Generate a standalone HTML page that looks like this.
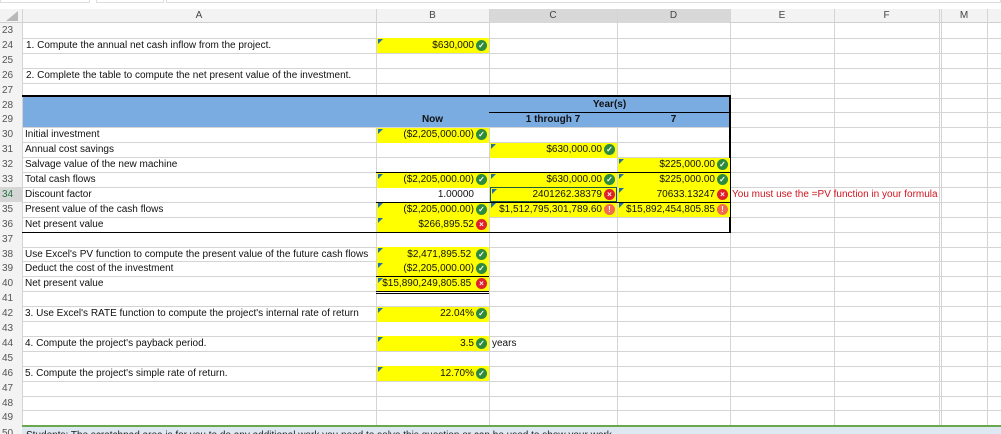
<!DOCTYPE html>
<html><head><meta charset="utf-8"><style>
*{margin:0;padding:0;box-sizing:border-box}
html,body{width:1001px;height:434px;overflow:hidden}
body{background:#fff;font-family:"Liberation Sans",sans-serif;font-size:10px;color:#111;position:relative}
.a{position:absolute}
.hl{position:absolute;left:0;width:1001px;height:1px;background:#d4d4d4}
.vl{position:absolute;top:9px;width:1px;height:425px;background:#d4d4d4}
.rn{position:absolute;left:0;width:22px;color:#555;font-size:10px;padding-left:2px;background:#f3f3f3;height:15px;line-height:15px}
.t{position:absolute;height:15px;line-height:15px;white-space:nowrap}
.y{position:absolute;height:15px;background:#ffff00}
.y:before{content:"";position:absolute;left:1px;top:1px;border-top:5px solid #1f6fa8;border-right:5px solid transparent}
.r{position:absolute;height:15px;line-height:15px;text-align:right;white-space:nowrap;overflow:visible}
.ic{display:inline-block;width:11px;height:11px;border-radius:50%;vertical-align:top;margin-top:2px;margin-left:2px;color:#fff;font-size:8px;line-height:11px;text-align:center;font-weight:bold}
.ok{background:#2e8b3e}.bad{background:#e0202a}.warn{background:#f26b4e}
.bk{position:absolute;height:1px;background:#000}
.hd{position:absolute;top:9px;height:14px;line-height:14px;text-align:center;color:#444}
</style></head><body>
<div class="a" style="left:0;top:0;width:90px;height:3px;border:1px solid #ddd;border-top:none"></div>
<div class="a" style="left:96px;top:0;width:68px;height:3px;border:1px solid #ddd;border-top:none"></div>
<div class="a" style="left:166px;top:0;width:835px;height:3px;border:1px solid #ddd;border-top:none"></div>
<div class="a" style="left:0;top:9px;width:1001px;height:14px;background:#f3f3f3;border-bottom:1px solid #cfcfcf"></div>
<div class="a" style="left:6px;top:11px;border-bottom:10px solid #b8b8b8;border-left:12px solid transparent"></div>
<div class="a" style="left:489px;top:9px;width:241px;height:14px;background:#d8d8d8"></div>
<div class="hd" style="left:22px;width:354px">A</div>
<div class="hd" style="left:376px;width:113px">B</div>
<div class="hd" style="left:489px;width:128px">C</div>
<div class="hd" style="left:617px;width:113px">D</div>
<div class="hd" style="left:730px;width:104px">E</div>
<div class="hd" style="left:834px;width:105px">F</div>
<div class="hd" style="left:941px;width:46px">M</div>
<div class="vl" style="left:22px"></div><div class="vl" style="left:376px"></div><div class="vl" style="left:489px"></div><div class="vl" style="left:617px"></div><div class="vl" style="left:730px"></div><div class="vl" style="left:834px"></div><div class="vl" style="left:939px"></div><div class="vl" style="left:941px"></div><div class="vl" style="left:987px"></div>
<div class="hl" style="top:37.9px"></div><div class="hl" style="top:52.8px"></div><div class="hl" style="top:67.7px"></div><div class="hl" style="top:82.6px"></div><div class="hl" style="top:97.5px"></div><div class="hl" style="top:112.4px"></div><div class="hl" style="top:127.3px"></div><div class="hl" style="top:142.2px"></div><div class="hl" style="top:157.1px"></div><div class="hl" style="top:172px"></div><div class="hl" style="top:186.9px"></div><div class="hl" style="top:201.8px"></div><div class="hl" style="top:216.7px"></div><div class="hl" style="top:231.6px"></div><div class="hl" style="top:246.5px"></div><div class="hl" style="top:261.4px"></div><div class="hl" style="top:276.3px"></div><div class="hl" style="top:291.2px"></div><div class="hl" style="top:306.1px"></div><div class="hl" style="top:321px"></div><div class="hl" style="top:335.9px"></div><div class="hl" style="top:350.8px"></div><div class="hl" style="top:365.7px"></div><div class="hl" style="top:380.6px"></div><div class="hl" style="top:395.5px"></div><div class="hl" style="top:410.4px"></div>
<div class="rn" style="top:23px">23</div><div class="rn" style="top:37.9px">24</div><div class="rn" style="top:52.8px">25</div><div class="rn" style="top:67.7px">26</div><div class="rn" style="top:82.6px">27</div><div class="rn" style="top:97.5px">28</div><div class="rn" style="top:112.4px">29</div><div class="rn" style="top:127.3px">30</div><div class="rn" style="top:142.2px">31</div><div class="rn" style="top:157.1px">32</div><div class="rn" style="top:172px">33</div><div class="rn" style="top:186.9px;background:#d6d6d6;color:#217346">34</div><div class="rn" style="top:201.8px">35</div><div class="rn" style="top:216.7px">36</div><div class="rn" style="top:231.6px">37</div><div class="rn" style="top:246.5px">38</div><div class="rn" style="top:261.4px">39</div><div class="rn" style="top:276.3px">40</div><div class="rn" style="top:291.2px">41</div><div class="rn" style="top:306.1px">42</div><div class="rn" style="top:321px">43</div><div class="rn" style="top:335.9px">44</div><div class="rn" style="top:350.8px">45</div><div class="rn" style="top:365.7px">46</div><div class="rn" style="top:380.6px">47</div><div class="rn" style="top:395.5px">48</div><div class="rn" style="top:410.4px">49</div><div class="rn" style="top:425.3px;line-height:17px">50</div>
<div class="a" style="left:23px;top:95.5px;width:707px;height:31.8px;background:#7aace2"></div>
<div class="bk" style="left:22px;top:95px;width:709px;height:1.5px"></div>
<div class="bk" style="left:489px;top:111.5px;width:241px"></div>
<div class="a" style="left:729px;top:95px;width:1.5px;height:138px;background:#000"></div>
<div class="t" style="left:489px;top:97px;width:241px;text-align:center;font-weight:bold">Year(s)</div>
<div class="t" style="left:376px;top:112px;width:113px;text-align:center;font-weight:bold">Now</div>
<div class="t" style="left:489px;top:112px;width:128px;text-align:center;font-weight:bold">1 through 7</div>
<div class="t" style="left:617px;top:112px;width:113px;text-align:center;font-weight:bold">7</div>
<div class="t" style="left:26px;top:37.9px">1. Compute the annual net cash inflow from the project.</div>
<div class="t" style="left:26px;top:67.7px">2. Complete the table to compute the net present value of the investment.</div>
<div class="t" style="left:25px;top:127.3px">Initial investment</div>
<div class="t" style="left:25px;top:142.2px">Annual cost savings</div>
<div class="t" style="left:25px;top:157.1px">Salvage value of the new machine</div>
<div class="t" style="left:25px;top:172px">Total cash flows</div>
<div class="t" style="left:25px;top:186.9px">Discount factor</div>
<div class="t" style="left:25px;top:201.8px">Present value of the cash flows</div>
<div class="t" style="left:25px;top:216.7px">Net present value</div>
<div class="t" style="left:25px;top:246.5px">Use Excel's PV function to compute the present value of the future cash flows</div>
<div class="t" style="left:25px;top:261.4px">Deduct the cost of the investment</div>
<div class="t" style="left:25px;top:276.3px">Net present value</div>
<div class="t" style="left:25px;top:306.1px">3. Use Excel's RATE function to compute the project's internal rate of return</div>
<div class="t" style="left:25px;top:335.9px">4. Compute the project's payback period.</div>
<div class="t" style="left:25px;top:365.7px">5. Compute the project's simple rate of return.</div>
<div class="y" style="left:377px;top:38.4px;width:112px"></div>
<div class="y" style="left:377px;top:127.8px;width:112px"></div>
<div class="y" style="left:490px;top:142.7px;width:127px"></div>
<div class="y" style="left:618px;top:157.6px;width:112px"></div>
<div class="y" style="left:377px;top:172.5px;width:112px"></div>
<div class="y" style="left:490px;top:172.5px;width:127px"></div>
<div class="y" style="left:618px;top:172.5px;width:112px"></div>
<div class="y" style="left:490px;top:187.4px;width:127px;border:1.5px solid #1e5e38"></div>
<div class="y" style="left:618px;top:187.4px;width:112px"></div>
<div class="y" style="left:377px;top:202.3px;width:112px"></div>
<div class="y" style="left:490px;top:202.3px;width:127px"></div>
<div class="y" style="left:618px;top:202.3px;width:112px"></div>
<div class="y" style="left:377px;top:217.2px;width:112px"></div>
<div class="y" style="left:377px;top:247px;width:112px"></div>
<div class="y" style="left:377px;top:261.9px;width:112px"></div>
<div class="y" style="left:377px;top:276.8px;width:112px"></div>
<div class="y" style="left:377px;top:306.6px;width:112px"></div>
<div class="y" style="left:377px;top:336.4px;width:112px"></div>
<div class="y" style="left:377px;top:366.2px;width:112px"></div>
<div class="bk" style="left:376px;top:172px;width:354px"></div>
<div class="bk" style="left:376px;top:201.8px;width:354px"></div>
<div class="bk" style="left:22px;top:231.6px;width:709px;height:1.5px"></div>
<div class="bk" style="left:376px;top:276.3px;width:113px"></div>
<div class="bk" style="left:376px;top:290.5px;width:113px"></div>
<div class="bk" style="left:376px;top:292.5px;width:113px"></div>
<div class="r" style="left:376px;top:37.9px;width:111px">$630,000<span class="ic ok">✓</span></div>
<div class="r" style="left:376px;top:127.3px;width:111px">($2,205,000.00)<span class="ic ok">✓</span></div>
<div class="r" style="left:489px;top:142.2px;width:126px">$630,000.00<span class="ic ok">✓</span></div>
<div class="r" style="left:617px;top:157.1px;width:111px">$225,000.00<span class="ic ok">✓</span></div>
<div class="r" style="left:376px;top:172px;width:111px">($2,205,000.00)<span class="ic ok">✓</span></div>
<div class="r" style="left:489px;top:172px;width:126px">$630,000.00<span class="ic ok">✓</span></div>
<div class="r" style="left:617px;top:172px;width:111px">$225,000.00<span class="ic ok">✓</span></div>
<div class="r" style="left:376px;top:186.9px;width:98px">1.00000</div>
<div class="r" style="left:489px;top:186.9px;width:126px">2401262.38379<span class="ic bad">×</span></div>
<div class="r" style="left:617px;top:186.9px;width:111px">70633.13247<span class="ic bad">×</span></div>
<div class="t" style="left:732px;top:186.9px;color:#d0141e">You must use the =PV function in your formula</div>
<div class="r" style="left:376px;top:201.8px;width:111px">($2,205,000.00)<span class="ic ok">✓</span></div>
<div class="r" style="left:489px;top:201.8px;width:126px">$1,512,795,301,789.60<span class="ic warn">!</span></div>
<div class="r" style="left:617px;top:201.8px;width:111px">$15,892,454,805.85<span class="ic warn">!</span></div>
<div class="r" style="left:376px;top:216.7px;width:111px">$266,895.52<span class="ic bad">×</span></div>
<div class="r" style="left:376px;top:246.5px;width:111px">$2,471,895.52 <span class="ic ok">✓</span></div>
<div class="r" style="left:376px;top:261.4px;width:111px">($2,205,000.00)<span class="ic ok">✓</span></div>
<div class="r" style="left:376px;top:276.3px;width:111px">$15,890,249,805.85 <span class="ic bad">×</span></div>
<div class="r" style="left:376px;top:306.1px;width:111px">22.04%<span class="ic ok">✓</span></div>
<div class="r" style="left:376px;top:335.9px;width:111px">3.5<span class="ic ok">✓</span></div>
<div class="t" style="left:492px;top:335.9px">years</div>
<div class="r" style="left:376px;top:365.7px;width:111px">12.70%<span class="ic ok">✓</span></div>
<div class="a" style="left:22px;top:424.5px;width:979px;height:10px;background:#dde8f2;border-top:2px solid #6aa84f;overflow:hidden">
<div class="t" style="left:4px;top:1px;color:#222">Students: The scratchpad area is for you to do any additional work you need to solve this question or can be used to show your work</div></div>
</body></html>
